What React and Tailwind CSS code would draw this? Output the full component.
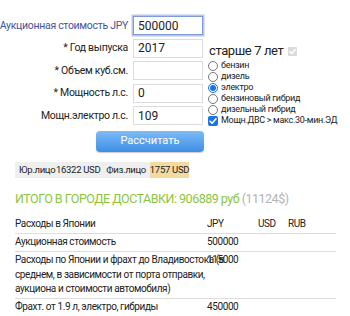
const rows = [
  { label: 'Аукционная стоимость JPY', value: '500000', focus: true },
  { label: '* Год выпуска', value: '2017' },
  { label: '* Объем куб.см.', value: '' },
  { label: '* Мощность л.с.', value: '0' },
  { label: 'Мощн.электро л.с.', value: '109' },
];

const fuels = ['бензин', 'дизель', 'электро', 'бензиновый гибрид', 'дизельный гибрид'];

const cell = 'py-[1.25px] text-[10px] leading-[14.5px] tracking-[-0.4px] align-top';

function Tick({ className }) {
  return (
    <svg viewBox="0 0 10 10" className={className} fill="none">
      <path d="M2 5.2 4.1 7.3 8 2.8" stroke="white" strokeWidth="1.6" strokeLinecap="round" strokeLinejoin="round" />
    </svg>
  );
}

function Radio({ checked }) {
  return (
    <span
      className={`grid h-[10px] w-[10px] shrink-0 place-items-center rounded-full border bg-white ${
        checked ? 'border-[#1a73e8]' : 'border-[#767676]'
      }`}
    >
      {checked ? <span className="h-[6px] w-[6px] rounded-full bg-[#1a73e8]" /> : null}
    </span>
  );
}

export default function App() {
  return (
    <div className="h-[316px] w-[350px] overflow-hidden bg-white font-['Roboto'] text-[#222]">
      <div className="flex pt-[16px]">
        <div className="flex w-[203px] flex-col gap-[3.5px]">
          {rows.map((row) => (
            <div key={row.label} className="flex h-[19px] items-center justify-end gap-[5px]">
              <span
                className={`whitespace-nowrap text-[10.5px] tracking-[-0.3px] ${
                  row.focus ? 'text-[#44549a]' : 'text-[#222]'
                }`}
              >
                {row.label}
              </span>
              <div
                className={`flex h-[19px] w-[70px] shrink-0 items-center border px-[4px] text-[12px] ${
                  row.focus ? 'border-[#7f9bd6] shadow-[0_0_0_1.5px_#b7c7ea]' : 'border-[#dcdcdc]'
                }`}
              >
                {row.value}
              </div>
            </div>
          ))}
          <div className="mt-[2.5px] flex justify-end">
            <button className="mr-[-1px] h-[21px] w-[108px] rounded-[4px] bg-gradient-to-b from-[#7cbcf6] to-[#3d8ee6] text-[11px] text-white shadow-[0_1px_1px_rgba(0,0,0,0.2)]">
              Рассчитать
            </button>
          </div>
        </div>
        <div className="ml-[6px] mt-[26px] flex flex-col">
          <div className="flex h-[18px] items-center gap-[5px]">
            <span className="whitespace-nowrap text-[13px] leading-[18px] tracking-[-0.4px]">старше 7 лет</span>
            <span className="grid h-[9px] w-[9px] place-items-center rounded-[1px] bg-[#dadada]">
              <Tick className="h-[9px] w-[9px]" />
            </span>
          </div>
          <div className="-ml-[1px] flex flex-col">
            {fuels.map((f) => (
              <div
                key={f}
                className="flex h-[11px] items-center gap-[3px] whitespace-nowrap text-[9px] leading-[11px] tracking-[-0.3px]"
              >
                <Radio checked={f === 'электро'} />
                <span>{f}</span>
              </div>
            ))}
            <div className="flex h-[11px] items-center gap-[3px] whitespace-nowrap text-[9px] leading-[11px] tracking-[-0.3px]">
              <span className="grid h-[10px] w-[10px] place-items-center rounded-[2px] bg-[#1a73e8]">
                <Tick className="h-[10px] w-[10px]" />
              </span>
              <span>Мощн.ДВС &gt; макс.30-мин.ЭД</span>
            </div>
          </div>
        </div>
      </div>

      <div className="ml-[15px] mt-[10px] flex h-[16px] w-[174px] items-center whitespace-nowrap bg-[#efefef] text-[9.5px] tracking-[-0.3px]">
        <span className="w-[41px] shrink-0 pl-[4px]">Юр.лицо</span>
        <span className="shrink-0">16322 USD</span>
        <span className="ml-auto shrink-0 pr-[4px]">Физ.лицо</span>
        <span className="flex h-full w-[39px] shrink-0 items-center justify-center bg-[#f2daa0]">1757 USD</span>
      </div>

      <div className="ml-[15px] mt-[13px] whitespace-nowrap text-[12.5px] leading-[16px] tracking-[-0.5px] text-[#8cc63e]">
        ИТОГО В ГОРОДЕ ДОСТАВКИ: 906889 руб <span className="text-[#b3b3b3]">(11124$)</span>
      </div>

      <table className="ml-[15px] mt-[9px] w-[321px] table-fixed border-collapse">
        <colgroup>
          <col className="w-[192px]" />
          <col className="w-[51px]" />
          <col className="w-[30px]" />
          <col />
        </colgroup>
        <tbody>
          <tr className="border-b border-[#dddddd]">
            <td className={cell}>Расходы в Японии</td>
            <td className={cell}>JPY</td>
            <td className={cell}>USD</td>
            <td className={cell}>RUB</td>
          </tr>
          <tr className="border-b border-[#dddddd]">
            <td className={cell}>Аукционная стоимость</td>
            <td className={cell}>500000</td>
            <td className={cell} />
            <td className={cell} />
          </tr>
          <tr className="border-b border-[#dddddd]">
            <td className={cell}>
              <span className="block whitespace-nowrap">Расходы по Японии и фрахт до Владивостока (в</span>
              <span className="block whitespace-nowrap">среднем, в зависимости от порта отправки,</span>
              <span className="block whitespace-nowrap">аукциона и стоимости автомобиля)</span>
            </td>
            <td className={cell}>115000</td>
            <td className={cell} />
            <td className={cell} />
          </tr>
          <tr className="border-b border-[#dddddd]">
            <td className={cell}>Фрахт. от 1.9 л, электро, гибриды</td>
            <td className={cell}>450000</td>
            <td className={cell} />
            <td className={cell} />
          </tr>
        </tbody>
      </table>
    </div>
  );
}
